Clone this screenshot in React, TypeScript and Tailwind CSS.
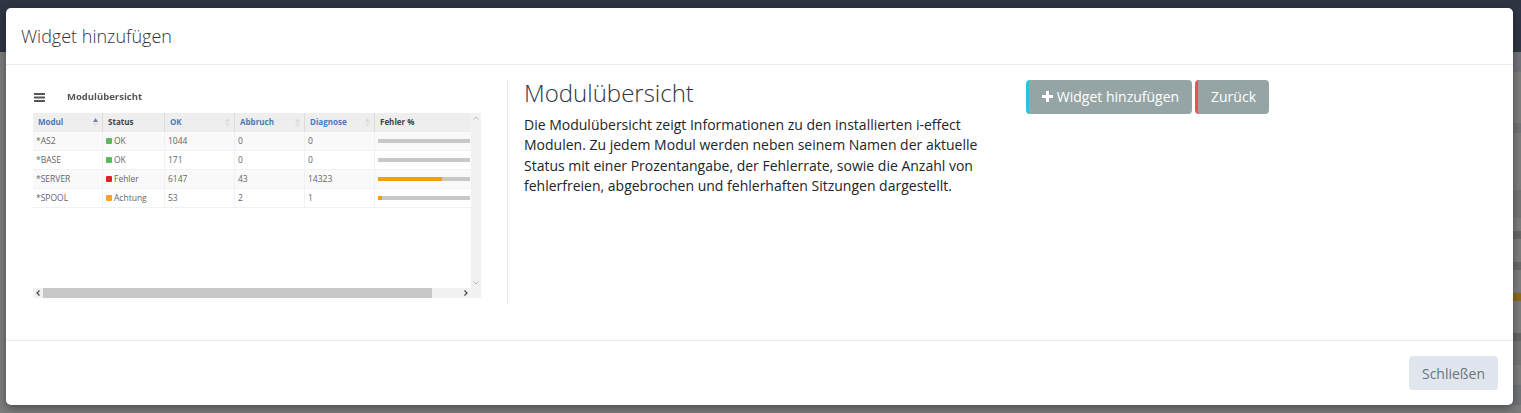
import React from "react";

const font = { fontFamily: '"Open Sans", "Noto Sans", sans-serif' };

type Row = { m: string; c: string; s: string; ok: string; a: string; d: string; p: number };
const rows: Row[] = [
  { m: "*AS2", c: "bg-[#5cb85c]", s: "OK", ok: "1044", a: "0", d: "0", p: 0 },
  { m: "*BASE", c: "bg-[#5cb85c]", s: "OK", ok: "171", a: "0", d: "0", p: 0 },
  { m: "*SERVER", c: "bg-[#e52020]", s: "Fehler", ok: "6147", a: "43", d: "14323", p: 70 },
  { m: "*SPOOL", c: "bg-[#ff9f2e]", s: "Achtung", ok: "53", a: "2", d: "1", p: 4 },
];

const cols = ["w-[70px]", "w-[62px]", "w-[70px]", "w-[70px]", "w-[70px]", "w-[96px]"];

function Sort({ active }: { active?: boolean }) {
  return (
    <svg width="5" height="9" viewBox="0 0 5 9" className="shrink-0">
      <path d="M2.5 0 5 4H0z" fill={active ? "#6f7fc4" : "#dcdcdc"} />
      <path d="M2.5 9 5 5H0z" fill="#e0e0e0" />
    </svg>
  );
}

function Head({ label, i, sort, active, blue }: { label: string; i: number; sort?: boolean; active?: boolean; blue?: boolean }) {
  return (
    <div className={`${cols[i]} h-[19px] shrink-0 flex items-center justify-between pl-[5px] pr-[4px] pb-[1px] border-r border-[#dcdcdc] last:border-r-0 text-[8px] font-bold ${blue ? "text-[#4a7ab8]" : "text-[#444]"}`}>
      <span>{label}</span>
      {sort && <Sort active={active} />}
    </div>
  );
}

function Cell({ i, children }: { i: number; children: React.ReactNode }) {
  return (
    <div className={`${cols[i]} h-[18px] shrink-0 flex items-center pl-[3px] border-r border-[#eef2f6] last:border-r-0 text-[8.5px] text-[#666]`}>
      {children}
    </div>
  );
}

function Preview() {
  return (
    <div className="w-[448px] blur-[0.4px] select-none">
      <div className="flex items-center h-[32px]">
        <svg width="11" height="9" viewBox="0 0 11 9" className="shrink-0 ml-[1px]">
          <path d="M0 0h11v2H0zM0 3.5h11v2H0zM0 7h11v2H0z" fill="#555" />
        </svg>
        <span className="ml-[22px] text-[9.5px] font-bold text-[#555]">Modulübersicht</span>
      </div>
      <div className="h-[185px]">
        <div className="flex h-[175px]">
          <div className="w-[438px] overflow-hidden">
            <div className="flex w-[438px] bg-[#eeeeee]">
              <Head label="Modul" i={0} sort active blue />
              <Head label="Status" i={1} />
              <Head label="OK" i={2} sort blue />
              <Head label="Abbruch" i={3} sort blue />
              <Head label="Diagnose" i={4} sort blue />
              <Head label="Fehler %" i={5} />
            </div>
            {rows.map((r, idx) => (
              <div key={r.m} className={`flex border-b border-[#eef2f6] ${idx % 2 === 0 ? "bg-[#f9f9f9]" : "bg-white"}`}>
                <Cell i={0}>{r.m}</Cell>
                <Cell i={1}>
                  <span className={`w-[6px] h-[6px] rounded-[1px] mr-[2px] ${r.c}`} />
                  {r.s}
                </Cell>
                <Cell i={2}>{r.ok}</Cell>
                <Cell i={3}>{r.a}</Cell>
                <Cell i={4}>{r.d}</Cell>
                <Cell i={5}>
                  <div className="w-[92px] h-[4px] bg-[#c8c8c8]">
                    <div className="h-full bg-[#f59e0b]" style={{ width: `${r.p}%` }} />
                  </div>
                </Cell>
              </div>
            ))}
          </div>
          <div className="w-[10px] bg-[#f1f1f1] flex flex-col justify-between items-center py-[3px]">
            <svg width="6" height="4" viewBox="0 0 6 4"><path d="M.5 3.5 3 1l2.500 2.500" fill="none" stroke="#bbb" /></svg>
            <svg width="6" height="4" viewBox="0 0 6 4"><path d="M.5.5 3 3 5.500.5" fill="none" stroke="#bbb" /></svg>
          </div>
        </div>
        <div className="h-[10px] bg-[#f1f1f1] flex items-center">
          <div className="w-[10px] flex justify-center">
            <svg width="4" height="6" viewBox="0 0 4 6"><path d="M3.500.5 1 3l2.500 2.500" fill="none" stroke="#444" strokeWidth="1.2" /></svg>
          </div>
          <div className="w-[389px] h-[10px] bg-[#c8c8c8]" />
          <div className="flex-1 flex justify-end pr-[13px]">
            <svg width="4" height="6" viewBox="0 0 4 6"><path d="M.5.5 3 3 .5 5.500" fill="none" stroke="#444" strokeWidth="1.2" /></svg>
          </div>
        </div>
      </div>
    </div>
  );
}

export default function App() {
  return (
    <div
      className="w-[1521px] h-[413px] overflow-hidden flex pl-[6px] bg-[linear-gradient(to_bottom,#2f3544_0,#2f3544_52px,#7c7c7c_52px,#7c7c7c_100%)]"
      style={font}
    >
      <div className="w-[1507px] h-[397px] mt-[8px] shrink-0 relative z-10 bg-white rounded-[5px] shadow-[0_3px_8px_rgba(0,0,0,0.4)] flex flex-col">
        <div className="h-[57px] shrink-0 border-b border-[#e9ecef] pl-[15px] flex items-center">
          <h1 className="text-[18px] font-light text-[#2f3545] leading-none">Widget hinzufügen</h1>
        </div>
        <div className="flex-1 flex pt-[15px] pl-[27px]">
          <div className="w-[475px] h-[224px] shrink-0 border-r border-[#e9ecef] pt-[1px]">
            <Preview />
          </div>
          <div className="w-[469px] shrink-0 pl-[16px]">
            <h2 className="text-[24px] font-light text-[#2f3545] leading-[28px] -mt-[1px]">Modulübersicht</h2>
            <p className="text-[14px] leading-[20.4px] text-[#212529] mt-[8px] w-[470px]">
              Die Modulübersicht zeigt Informationen zu den installierten i-effect Modulen. Zu jedem Modul werden neben seinem Namen der aktuelle Status mit einer Prozentangabe, der Fehlerrate, sowie die Anzahl von fehlerfreien, abgebrochen und fehlerhaften Sitzungen dargestellt.
            </p>
          </div>
          <div className="flex gap-[3px] pl-[49px] items-start">
            <button className="h-[34px] w-[166px] rounded-[4px] bg-[#95a5a6] border-l-[3px] border-[#26c6da] text-white text-[14px] flex items-center justify-center pb-[1px]">
              <svg width="11" height="11" viewBox="0 0 11 11" className="mr-[4px]">
                <path d="M4 0h3v4h4v3H7v4H4V7H0V4h4z" fill="#fff" />
              </svg>
              Widget hinzufügen
            </button>
            <button className="h-[34px] w-[74px] rounded-[4px] bg-[#95a5a6] border-l-[3px] border-[#e8505b] text-white text-[14px] flex items-center justify-center pb-[1px]">
              Zurück
            </button>
          </div>
        </div>
        <div className="h-[65px] shrink-0 border-t border-[#e9ecef] flex justify-end items-start pt-[15px] pr-[15px]">
          <button className="h-[34px] w-[89px] rounded-[4px] bg-[#e1e6ee] text-[#6c757d] text-[14px]">Schließen</button>
        </div>
      </div>
      <div className="w-[8px] h-full shrink-0 bg-[linear-gradient(to_bottom,#2f3544_0,#2f3544_52px,#6f7276_52px,#6f7276_72px,#7c7c7c_72px,#7c7c7c_123px,#6f7276_123px,#6f7276_133px,#7c7c7c_133px,#7c7c7c_190px,#747474_190px,#747474_218px,#7c7c7c_218px,#7c7c7c_231px,#666666_231px,#666666_239px,#7c7c7c_239px,#7c7c7c_262px,#696969_262px,#696969_270px,#7c7c7c_270px,#7c7c7c_293px,#8c6a1e_293px,#8c6a1e_301px,#7c7c7c_301px,#7c7c7c_333px,#646464_333px,#646464_341px,#747474_341px,#747474_365px,#7c7c7c_365px,#7c7c7c_385px,#6f7276_385px,#6f7276_405px,#7c7c7c_405px)]" />
    </div>
  );
}
